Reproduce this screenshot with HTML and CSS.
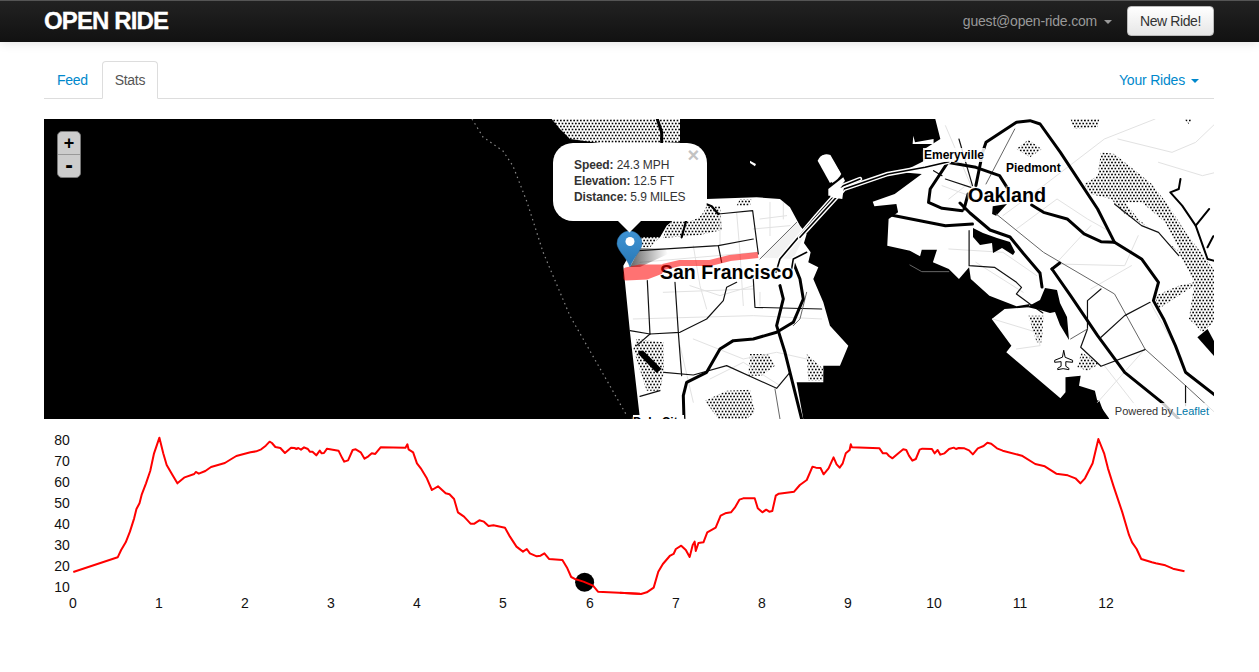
FILE: index.html
```html
<!DOCTYPE html>
<html lang="en">
<head>
<meta charset="utf-8">
<title>Open Ride</title>
<link rel="stylesheet" href="styles.css">
</head>
<body>
<header class="navbar">
  <a class="brand" href="#">OPEN RIDE</a>
  <div class="nav-right">
    <a class="user" href="#">guest@open-ride.com<span class="caret caret-gray"></span></a>
    <button class="btn" type="button">New Ride!</button>
  </div>
</header>
<main class="container">
  <nav class="tabs">
    <a class="tab" href="#">Feed</a>
    <a class="tab tab-active" href="#">Stats</a>
    <a class="tab tab-right" href="#">Your Rides<span class="caret caret-blue"></span></a>
  </nav>
  <section class="map">
    <svg class="map-base" width="1170" height="300" viewBox="44 119 1170 300" aria-hidden="true">
      <defs>
        <pattern id="dots" width="10" height="18" patternUnits="userSpaceOnUse">
          <rect width="10" height="18" fill="#fff"/>
          <circle cx="2.5" cy="4.5" r="2.7" fill="#000"/>
          <circle cx="7.5" cy="13.5" r="2.7" fill="#000"/>
        </pattern>
        <pattern id="grid" width="3" height="3" patternUnits="userSpaceOnUse" patternTransform="rotate(-40)">
          <rect width="3" height="3" fill="#fff"/>
          <path d="M0 0H3M0 0V3" stroke="#bbb" stroke-width=".7"/>
        </pattern>
      </defs>
      <rect class="water" x="44" y="119" width="1170" height="300"/>
      <polyline class="boundary" points="472,119 483,137 503,151 513,166 527,202 543,252 570,316 610,386 627,416"/>

      <g transform="translate(460 119) scale(.3333)">
        <polygon class="land" points="490,440 535,360 600,355 620,320 660,288 700,260 740,240 890,235 960,240 990,265 1020,320 1040,345 1032,372 1052,400 1045,430 1075,445 1060,480 1090,550 1110,620 1165,680 1140,740 1090,740 1090,790 1010,790 1030,900 540,900 510,640"/>
        <polygon class="hatch" points="275,0 660,0 660,70 560,75 440,75 330,60 300,30"/>
        <polygon class="hatch" points="609,357 621,321 660,288 720,262 780,261 786,333 720,348"/>
        <polygon class="hatch" points="840,240 875,240 870,260 830,260"/>
        <polygon class="hatch" points="530,660 610,670 612,760 600,815 560,815 520,690"/>
        <polygon class="hatch" points="545,355 600,355 570,385 545,385"/>
        <polygon class="hatch" points="870,705 925,705 945,740 905,770 865,770"/>
        <polygon class="hatch" points="735,845 800,815 870,812 885,880 860,900 775,900"/>
        <polygon class="hatch" points="1040,705 1090,750 1088,785 1045,785"/>
        <polygon class="water" points="535,695 550,695 605,750 590,762 535,705"/>

        <polyline class="st" points="520,600 880,590 1085,600"/>
        <polyline class="st" points="540,430 890,400"/>
        <polyline class="st" points="700,380 720,500 740,570"/>
        <polyline class="st" points="830,280 840,400 850,560"/>
        <polyline class="st" points="700,660 850,720 950,700 1040,720"/>
        <polyline class="st" points="750,780 850,730 960,800"/>
        <polyline class="st" points="610,520 880,510"/>
        <polyline class="st" points="780,290 780,380"/>
        <polyline class="st" points="660,680 700,850"/>
        <polyline class="st" points="690,500 780,530 880,500"/>
        <polyline class="st" points="900,300 980,290"/>
        <polyline class="st" points="880,330 990,320"/>
        <polyline class="st" points="930,250 930,350"/>
        <polyline class="st" points="970,250 970,300"/>
        <polyline class="st" points="900,520 900,560"/>
        <polygon class="grid" points="900,415 1010,310 1035,345 1000,420"/>

        <polyline class="rd" points="535,395 775,380 880,360"/>
        <polyline class="rd" points="775,285 878,275 895,405"/>
        <polyline class="hw-m" points="725,250 755,262 775,285"/>
        <polyline class="rd" points="562,485 570,645"/>
        <polyline class="rd" points="645,490 655,640 665,770"/>
        <polyline class="rd" points="775,380 785,430"/>
        <polyline class="rd" points="880,480 885,565 1085,570"/>
        <polyline class="rd" points="510,635 570,645 660,640 740,600 790,545 800,505 830,490"/>
        <polyline class="rd" points="600,815 540,832"/>
        <polyline class="rd" points="612,760 700,768 800,740 950,808 990,760"/>
        <polyline class="rd" points="570,645 530,680"/>
        <polyline class="thin" points="900,420 1010,310"/>
        <polyline class="thin" points="1000,620 1020,600 1040,520"/>
        <polyline class="thin" points="945,810 960,900"/>
        <polyline class="hw" points="592,0 605,40 605,70"/>
        <polyline class="hw-m" points="680,300 665,355"/>
        <polyline class="hw" points="1000,430 1020,480 1030,540 1000,610 950,640 880,660 820,665 780,690 740,760 680,790 670,830 672,900"/>
        <polyline class="hw" points="960,500 970,540 950,620 975,700 1000,800 1025,900"/>
        <polyline class="bridge-o" points="1200,180 1150,200 1070,290 960,420 948,460"/>
        <polyline class="bridge-i" points="1200,180 1150,200 1070,290 960,420 948,460"/>
        <polyline class="bridge-o" points="1040,400 1000,420 995,450"/>
        <polyline class="bridge-i" points="1040,400 1000,420 995,450"/>
        <path class="land" d="M1073,125 Q1085,100 1110,110 L1140,160 Q1140,175 1110,192 Z"/>
        <polygon class="land" points="1105,210 1150,175 1155,185 1120,230 1105,230"/>
        <polygon class="land" points="870,125 888,135 885,142 870,132"/>
      </g>

      <g transform="translate(800 119) scale(.3382 .3333)">
        <polygon class="land" points="400,0 1242,0 1242,900 915,900 880,850 872,815 825,800 830,770 785,775 785,820 770,838 610,700 625,680 567,600 605,570 675,565 680,555 640,562 560,530 505,480 500,445 470,480 440,450 393,430 405,392 360,392 355,412 325,395 258,380 262,300 290,280 285,255 220,262 215,248 280,225 340,180 360,165 300,160 368,125 368,90 415,60"/>
        <polygon class="land" points="335,50 340,70 395,60 395,75 333,75"/>
        <polygon class="water" points="860,840 885,845 900,885 875,880"/>

        <polygon class="hatch" points="890,100 930,105 1040,195 1090,260 1140,340 1230,460 1232,600 1190,640 1150,600 1165,500 1060,570 1050,530 1120,500 1165,490 1120,400 1040,330 960,285 920,240 860,225 840,195 880,170"/>
        <polygon class="land" points="960,250 1010,250 1080,310 1125,400 1060,350 1000,300"/>
        <polygon class="hatch" points="640,90 675,62 715,90 680,115"/>
        <polygon class="hatch" points="800,0 885,0 880,25 810,30"/>
        <polygon class="hatch" points="1135,0 1160,0 1150,15"/>
        <polygon class="hatch" points="675,590 720,590 715,670 700,670"/>
        <polygon class="hatch" points="832,700 885,735 850,755 820,745"/>

        <polygon class="water" points="570,262 612,255 580,290 568,285"/>
        <polygon class="water" points="1175,655 1205,630 1242,700 1225,712"/>

        <polyline class="st" points="430,20 510,210"/>
        <polyline class="st" points="420,200 500,230"/>
        <polyline class="st" points="440,240 490,200"/>
        <polyline class="st" points="600,290 720,200 900,60 1050,0"/>
        <polyline class="st" points="640,330 760,240 850,300 920,340"/>
        <polyline class="st" points="760,430 860,320"/>
        <polyline class="st" points="760,435 960,440 1000,350"/>
        <polyline class="st" points="860,510 980,440"/>
        <polyline class="st" points="940,60 1100,100 1170,70 1242,0"/>
        <polyline class="st" points="1060,130 1190,170 1230,160"/>
        <polyline class="st" points="440,390 600,400 700,470"/>
        <polyline class="st" points="520,430 660,520"/>
        <polyline class="st" points="570,600 700,640 710,680 640,690"/>
        <polyline class="st" points="1020,690 880,850"/>
        <polyline class="st" points="900,740 1000,870"/>
        <polyline class="st" points="1035,550 1130,720"/>
        <polyline class="rd" points="500,335 500,440 575,445 640,490 655,505 640,525 680,555 718,582"/>
        <polyline class="rd" points="430,180 505,205"/>
        <polyline class="rd" points="395,155 420,170"/>
        <polyline class="rd" points="470,60 510,200"/>
        <polyline class="thin" points="580,285 720,400 930,525 1020,690 1140,800 1242,895"/>
        <polyline class="thin" points="635,30 550,195"/>
        <polyline class="rd" points="1140,800 1140,860"/>
        <polyline class="rd" points="890,510 850,545 850,630 830,685 890,742 1020,692"/>
        <polyline class="rd" points="1035,550 960,590 890,655"/>
        <polyline class="thin" points="325,438 360,458 440,458"/>
        <polyline class="thin" points="850,630 800,660"/>
        <polyline class="rd" points="930,255 1010,320 1060,340 1120,410"/>

        <polyline class="hw" points="437,130 385,210 380,250 420,268 480,275"/>
        <polyline class="hw" points="265,287 430,320 510,315"/>
        <polyline class="hw" points="435,130 520,145 590,170 612,205"/>
        <polyline class="hw" points="685,258 720,280 790,300 840,345 890,368 930,370 1010,420 1060,490 1045,545 1075,600 1110,680 1140,760 1242,840"/>
        <polyline class="hw" points="745,450 800,530 880,650 960,760 1070,850 1120,900"/>
        <polyline class="hw" points="540,100 550,70 640,10 680,5 710,15 770,100 880,270 915,340 930,370"/>
        <polyline class="hw" points="540,100 520,200"/>
        <polyline class="hw" points="497,225 485,270"/>
        <polyline class="hw" points="745,450 768,432"/>
        <polyline class="wline" points="1125,180 1120,210 1095,220 1130,260 1170,320 1205,420 1242,430"/>
        <polyline class="wline" points="1170,320 1210,270"/>
        <polyline class="wline" points="1205,385 1222,352 1242,350"/>
        <polyline class="bridge-o" points="0,355 130,210 260,165 370,145 440,128"/>
        <polyline class="bridge-i" points="0,355 130,210 260,165 370,145 440,128"/>
        <path class="land" d="M55,125 Q65,100 90,108 L122,165 Q115,180 95,192 Z"/>
        <polygon class="land" points="90,210 130,205 125,240 90,235"/>
        <path class="plane" d="M780,695 L784,715 L806,724 L806,730 L786,728 L786,742 L795,748 L795,752 L778,749 L762,752 L762,748 L772,742 L772,728 L753,730 L753,724 L775,715 Z"/>
      </g>

      <polygon class="water" points="973,228 983,233 997,238 1010,242 1015,252 1013,255 1002,248 993,253 992,243 980,245 973,237"/>
      <polygon class="water" points="1027,307 1040,300 1045,288 1057,290 1060,303 1067,317 1069,340 1060,325 1055,312 1050,313 1040,310"/>
      <polyline class="hw-p" points="960,203 970,213 990,230 1010,237 1023,253 1040,273 1042,287"/>
    </svg>

    <span class="place place-lg place-sf">San Francisco</span>
    <span class="place place-lg place-oak">Oakland</span>
    <span class="place place-sm place-emery">Emeryville</span>
    <span class="place place-sm place-pied">Piedmont</span>
    <span class="place place-sm place-daly">Daly City</span>

    <svg class="map-overlay" width="1170" height="300" viewBox="44 119 1170 300" aria-hidden="true">
      <defs>
        <linearGradient id="pin" x1="0" y1="0" x2="0" y2="1">
          <stop offset="0" stop-color="#3f93d4"/>
          <stop offset="1" stop-color="#2878b5"/>
        </linearGradient>
        <linearGradient id="pin-shadow" x1="0" y1="0" x2="1" y2="0">
          <stop offset="0" stop-color="#000" stop-opacity=".6"/>
          <stop offset="1" stop-color="#000" stop-opacity="0"/>
        </linearGradient>
      </defs>
      <polygon class="pin-shadow" points="630,267 640,248 665,248 668,254 640,267"/>
      <g class="route">
        <polyline class="route-line" points="758,255 730,258 710,263 680,263 663,267"/>
        <polygon class="route-loop" points="663,267 640,267 626,270 626,278 647,277 660,272"/>
      </g>
      <path class="pin" d="M630,267 C627,258 617,250 617,243.5 A12.5,12.5 0 0 1 642,243.5 C642,250 633,258 630,267 Z"/>
      <circle class="pin-hole" cx="630" cy="241.5" r="4.5"/>
    </svg>

    <div class="zoom">
      <a class="zoom-btn zoom-in" href="#">+</a>
      <a class="zoom-btn zoom-out" href="#">-</a>
    </div>

    <div class="popup">
      <a class="popup-close" href="#">×</a>
      <div class="popup-line"><b>Speed:</b> 24.3 MPH</div>
      <div class="popup-line"><b>Elevation:</b> 12.5 FT</div>
      <div class="popup-line"><b>Distance:</b> 5.9 MILES</div>
      <span class="popup-tip"></span>
    </div>

    <div class="attribution">Powered by <a href="#">Leaflet</a></div>
  </section>

  <svg class="chart" width="1170" height="190" viewBox="44 425 1170 190" role="img">
    <g class="y-axis">
      <text x="62" y="445">80</text>
      <text x="62" y="466">70</text>
      <text x="62" y="487">60</text>
      <text x="62" y="508">50</text>
      <text x="62" y="529">40</text>
      <text x="62" y="550">30</text>
      <text x="62" y="571">20</text>
      <text x="62" y="592">10</text>
    </g>
    <g class="x-axis">
      <text x="73" y="608">0</text>
      <text x="159" y="608">1</text>
      <text x="245" y="608">2</text>
      <text x="331" y="608">3</text>
      <text x="417" y="608">4</text>
      <text x="503" y="608">5</text>
      <text x="590" y="608">6</text>
      <text x="676" y="608">7</text>
      <text x="762" y="608">8</text>
      <text x="848" y="608">9</text>
      <text x="934" y="608">10</text>
      <text x="1020" y="608">11</text>
      <text x="1106" y="608">12</text>
    </g>
    <circle class="dot" cx="584.6" cy="582.3" r="9.5"/>
    <polyline class="line" transform="translate(40 425) scale(.3827 .3333)" points="87,441 203,397 212,375 224,352 235,320 246,280 252,252 260,235 266,208 277,175 288,138 298,85 312,38 322,85 331,120 345,148 359,175 378,157 403,147 407,141 415,146 432,138 447,126 483,114 500,102 513,93 530,88 550,82 565,79 578,73 590,62 600,50 606,54 615,66 628,69 640,84 656,68 665,69 670,72 675,69 682,74 690,67 700,72 705,80 712,80 722,91 731,77 736,85 742,84 750,71 780,77 790,100 795,110 805,106 817,75 825,73 838,82 848,101 858,94 867,85 876,87 890,67 955,68 960,58 963,73 975,82 985,115 995,130 1010,158 1024,195 1040,184 1060,205 1070,208 1082,222 1092,262 1108,275 1125,296 1135,296 1148,286 1160,290 1172,303 1185,301 1215,308 1228,335 1245,365 1262,380 1272,372 1280,385 1298,394 1308,392 1318,385 1330,402 1365,405 1378,430 1388,456 1400,463 1420,470 1445,482 1458,500 1568,506"/>
    <polyline class="line" transform="translate(620 425) scale(.3827 .3333)" points="0,503 55,507 70,502 88,488 100,440 112,417 130,393 140,387 146,372 160,362 172,375 182,396 190,360 195,350 198,378 205,354 218,352 228,322 250,308 263,272 275,265 290,262 300,248 312,224 322,220 352,220 360,250 372,262 382,254 390,260 398,258 407,212 415,206 455,200 470,180 488,165 503,125 512,128 524,129 532,148 545,130 558,97 566,118 574,128 582,115 590,85 600,75 603,58 606,67 678,70 687,85 697,85 703,93 712,100 722,90 740,73 748,75 755,92 764,107 773,102 783,74 790,71 815,72 822,85 830,75 837,89 848,85 860,72 872,68 878,72 885,69 900,70 912,76 922,88 935,70 950,63 960,53 970,56 985,70 1000,77 1050,92 1085,117 1110,124 1140,146 1170,151 1190,160 1203,175 1215,160 1235,115 1250,42 1265,85 1275,130 1290,185 1312,260 1330,330 1338,352 1350,372 1362,402 1390,412 1400,415 1425,421 1445,431 1475,439"/>
  </svg>
</main>
</body>
</html>
```

FILE: styles.css
```css
* { box-sizing: border-box; }
html, body { margin: 0; padding: 0; }
body {
  background: #fff;
  color: #333;
  font-family: "Liberation Sans", Arial, sans-serif;
  font-size: 14px;
  line-height: 20px;
  overflow: hidden;
}
a { text-decoration: none; }

.navbar {
  display: flex;
  align-items: center;
  justify-content: space-between;
  height: 42px;
  padding: 0 45px 1px 44px;
  background: linear-gradient(#222, #111);
  border-top: 1px solid #555;
  box-shadow: 0 1px 10px rgba(0, 0, 0, .12);
}
.brand {
  color: #fff;
  font-size: 24px;
  font-weight: bold;
  letter-spacing: -.87px;
  line-height: 40px;
  -webkit-text-stroke: .3px #fff;
}
.nav-right { display: flex; align-items: center; }
.user { color: #999; font-size: 14px; letter-spacing: -.2px; margin-right: 15px; }
.btn {
  width: 87px;
  height: 30px;
  padding: 0;
  border: 1px solid #bbb;
  border-radius: 4px;
  background: linear-gradient(#fff, #e6e6e6);
  color: #333;
  font: 14px "Liberation Sans", Arial, sans-serif;
  letter-spacing: -.4px;
}
.caret {
  display: inline-block;
  width: 0;
  height: 0;
  margin-left: 7px;
  vertical-align: middle;
  border-left: 4px solid transparent;
  border-right: 4px solid transparent;
  border-top: 4px solid #999;
}
.caret-blue { border-top-color: #08c; margin-left: 6px; }

.container { padding: 0 45px 0 44px; }
.tabs {
  display: flex;
  height: 38px;
  margin-top: 19px;
  border-bottom: 1px solid #ddd;
}
.tab {
  height: 38px;
  padding: 8px 12px;
  border: 1px solid transparent;
  border-radius: 4px 4px 0 0;
  color: #08c;
  margin-right: 1px;
  letter-spacing: -.3px;
}
.tab-active {
  color: #555;
  background: #fff;
  border-color: #ddd #ddd #fff;
}
.tab-right { margin: 0 0 0 auto; padding-right: 14px; letter-spacing: -.2px; }

.map {
  position: relative;
  height: 300px;
  margin-top: 20px;
  overflow: hidden;
  background: #000;
}
.map-base { display: block; }
.map-overlay { position: absolute; left: 0; top: 0; }
.water { fill: #000; }
.land { fill: #fff; }
.hatch { fill: url(#dots); }
.grid { fill: url(#grid); }
.boundary {
  fill: none;
  stroke: #888;
  stroke-width: 1.2;
  stroke-dasharray: 1.5 3.5;
}
.st, .rd, .thin, .hw, .hw-m, .hw-p, .bridge-o, .bridge-i, .wline, .plane {
  fill: none;
  vector-effect: non-scaling-stroke;
  stroke-linejoin: round;
  stroke-linecap: round;
}
.st { stroke: #e2e2e2; stroke-width: 1; }
.rd { stroke: #111; stroke-width: 1.2; }
.thin { stroke: #666; stroke-width: 1; }
.hw, .hw-p { stroke: #000; stroke-width: 3; }
.hw-m { stroke: #000; stroke-width: 2.2; }
.bridge-o { stroke: #fff; stroke-width: 4.5; }
.bridge-i { stroke: #000; stroke-width: 1.6; }
.wline { stroke: #000; stroke-width: 2; }
.plane { stroke: #000; stroke-width: 1; fill: #fff; }

.place {
  position: absolute;
  color: #000;
  font-weight: bold;
  white-space: nowrap;
  text-shadow: 0 0 2px #fff, 0 0 2px #fff, 0 0 3px #fff;
}
.place-lg { font-size: 19.5px; line-height: 20px; }
.place-sm { font-size: 12px; line-height: 14px; }
.place-sf { left: 616px; top: 143px; }
.place-oak { left: 924px; top: 66px; font-size: 19.8px; }
.place-emery { left: 880px; top: 29px; background: rgba(255, 255, 255, .85); padding: 0 1px; margin-left: -1px; }
.place-pied { left: 962px; top: 42px; }
.place-daly { left: 589px; top: 296px; background: #fff; }

.route { opacity: .55; }
.route-line {
  fill: none;
  stroke: #f00;
  stroke-width: 6;
  stroke-linejoin: round;
}
.route-loop {
  fill: #f00;
  stroke: #f00;
  stroke-width: 5;
  stroke-linejoin: round;
}
.pin { fill: url(#pin); stroke: #2a6fa5; stroke-width: .5; }
.pin-hole { fill: #fff; }
.pin-shadow { fill: url(#pin-shadow); }

.zoom {
  position: absolute;
  left: 13px;
  top: 12px;
  width: 24px;
  height: 47px;
  border: 1px solid #777;
  border-radius: 5px;
  background: #ccc;
  display: flex;
  flex-direction: column;
}
.zoom-btn {
  flex: 1;
  display: block;
  color: #000;
  font-size: 18px;
  font-weight: bold;
  line-height: 22px;
  text-align: center;
}
.zoom-in { border-bottom: 1px solid #999; }
.zoom-out { font-size: 23px; line-height: 20px; }

.popup {
  position: absolute;
  left: 509px;
  top: 24px;
  width: 154px;
  height: 78px;
  padding: 14px 0 0 21px;
  border-radius: 20px;
  background: #fff;
  color: #333;
  font-size: 12px;
  line-height: 16px;
  letter-spacing: -.1px;
}
.popup-line { white-space: nowrap; position: relative; z-index: 1; }
.popup-close {
  position: absolute;
  right: 8px;
  top: 4px;
  color: #c3c3c3;
  font-size: 20px;
  font-weight: bold;
  line-height: 16px;
}
.popup-tip {
  position: absolute;
  left: 68px;
  top: 69px;
  width: 17px;
  height: 17px;
  background: #fff;
  transform: rotate(45deg);
}

.attribution {
  position: absolute;
  right: 0;
  bottom: 0;
  height: 16px;
  padding: 0 5px 0 6px;
  background: rgba(255, 255, 255, .8);
  color: #333;
  font-size: 11px;
  line-height: 16px;
}
.attribution a { color: #0078a8; }

.chart { display: block; margin-top: 6px; }
.chart text {
  font-family: "Liberation Sans", Arial, sans-serif;
  font-size: 14px;
  fill: #111;
}
.y-axis text { text-anchor: middle; }
.x-axis text { text-anchor: middle; }
.line {
  fill: none;
  stroke: #f00;
  stroke-width: 2;
  stroke-linejoin: round;
  vector-effect: non-scaling-stroke;
}
.dot { fill: #000; }
```
